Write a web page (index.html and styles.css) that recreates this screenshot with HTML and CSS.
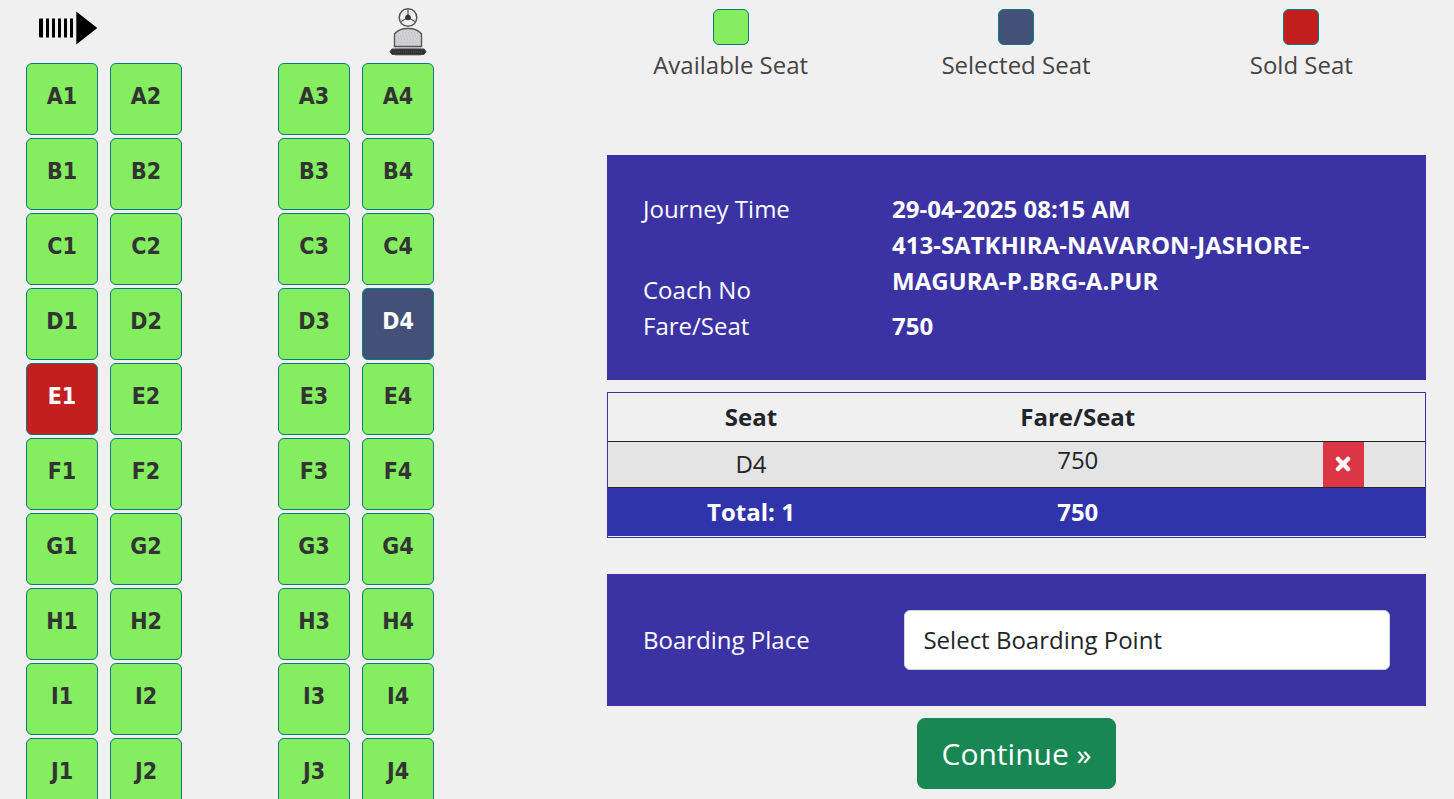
FILE: index.html
```html
<!DOCTYPE html>
<html lang="en">
<head>
  <meta charset="utf-8"/>
  <meta name="viewport" content="width=device-width, initial-scale=1">
  <link rel="stylesheet" href="styles.css">
  <script src="seats.js" defer></script>
  <title>Select Seat</title>
</head>
<body>
  <div class="booking">
    <section class="coach">
      <div class="coach-front">
        <svg class="door-arrow" width="60" height="36" viewBox="0 0 60 36" role="img" aria-label="Door">
          <path d="M2 8.500h3v19H2q-1 0-1-1v-17q0-1 1-1zM8 8.500h3v19H8zM14 8.500h3v19h-3zM20 8.500h3v19h-3zM26 8.500h3v19h-3zM32 8.500h3v19h-3zM38.300 1.500l21 16.500-21 16.500z"/>
        </svg>
        <svg class="driver" width="40" height="50" viewBox="0 0 40 50" role="img" aria-label="Driver">
          <!-- steering wheel -->
          <circle cx="20" cy="10.500" r="8.800" fill="#eee" stroke="#555" stroke-width="1.500"/>
          <path d="M20 10.500V2.500M20 10.500l-7 4M20 10.500l7 4" stroke="#555" stroke-width="1.300"/>
          <circle cx="20" cy="10.500" r="2.800" fill="#333"/>
          <!-- seat -->
          <path d="M6.500 39.500V27c3-4 8-5.500 13.500-5.500s10.500 1.500 13.500 5.500v12.500z" fill="#d0d0d6" stroke="#555" stroke-width="1.400"/>
          <path d="M11 26h19M9 29h22M10 32h21M9 35h22M10 38h21" stroke="#b8b8c8" stroke-dasharray="1 2"/>
          <path d="M12 27.500h19M10 30.500h21M12 33.500h20M10 36.500h21" stroke="#ddcfaa" stroke-dasharray="1 3"/>
          <rect x="7" y="40" width="26" height="2" fill="#bbb"/>
          <path d="M4 42h32l2 2.500-2 3H4l-2-3z" fill="#333" stroke="#444" stroke-linejoin="round"/>
          <path d="M5 45h30" stroke="#555" stroke-dasharray="1 1"/>
          <path d="M7 48.500h26" stroke="#bbb"/>
        </svg>
      </div>
      <div class="seats" id="seats"></div>
    </section>

    <main class="details">
      <ul class="legend">
        <li><span class="swatch available"></span>Available Seat</li>
        <li><span class="swatch selected"></span>Selected Seat</li>
        <li><span class="swatch sold"></span>Sold Seat</li>
      </ul>

      <dl class="panel journey">
        <dt>Journey Time</dt>
        <dd>29-04-2025 08:15 AM</dd>
        <dt class="coach-label">Coach No</dt>
        <dd class="coach-name">413-SATKHIRA-NAVARON-JASHORE-MAGURA-P.BRG-A.PUR</dd>
        <dt>Fare/Seat</dt>
        <dd>750</dd>
      </dl>

      <div class="fare-box">
        <table class="fares">
          <colgroup>
            <col class="col-seat">
            <col class="col-fare">
            <col class="col-remove">
          </colgroup>
          <thead>
            <tr><th>Seat</th><th>Fare/Seat</th><th></th></tr>
          </thead>
          <tbody>
            <tr>
              <td>D4</td>
              <td class="fare">750</td>
              <td>
                <button type="button" class="remove" aria-label="Remove seat D4">
                  <svg width="16" height="16" viewBox="0 0 16 16"><path d="M3 3l10 10M13 3L3 13" stroke="#fff" stroke-width="4.500" stroke-linecap="round"/></svg>
                </button>
              </td>
            </tr>
          </tbody>
          <tfoot>
            <tr><th>Total: 1</th><th>750</th><th></th></tr>
          </tfoot>
        </table>
      </div>

      <div class="panel boarding">
        <label for="boarding-place">Boarding Place</label>
        <select id="boarding-place">
          <option>Select Boarding Point</option>
        </select>
      </div>

      <button type="button" class="continue">Continue »</button>
    </main>
  </div>
</body>
</html>
```
FILE: styles.css
```css
* {
  box-sizing: border-box;
}

body {
  margin: 0;
  background: #f0f0f0;
  color: #212529;
  font: 24px/36px "Open Sans", sans-serif;
  height: 100vh;
  overflow: hidden;
}

.booking {
  display: grid;
  grid-template-columns: 1fr 58.5%;
  padding: 0 28px 0 26px;
}

.coach-front {
  display: flex;
  justify-content: space-between;
  width: 408px;
  height: 63px;
  padding: 7px 6px 0 12px;
}

.door-arrow {
  margin-top: 3px;
}

/* two seats, aisle, two seats */
.seats {
  display: grid;
  grid-template-columns: 72px 72px 72px 72px 72px;
  gap: 3px 12px;
}

.seat {
  height: 72px;
  padding: 0 0 6px;
  border: 1px solid #0a7a7a;
  border-radius: 6px;
  color: #333;
  font: bold 23px/36px "DejaVu Sans Condensed", "DejaVu Sans", sans-serif;
  cursor: pointer;
}

.seat:nth-child(4n+3) {
  grid-column: 4;
}

.available {
  background: #84ee60;
}

.selected {
  background: #435078;
}

.sold {
  background: #c31f1f;
}

.seat.selected,
.seat.sold {
  color: #fff;
}

.legend {
  display: grid;
  grid-template-columns: 1fr 1fr 1fr;
  height: 155px;
  margin: 0 -18px 0 -19px;
  padding: 9px 0 0;
  list-style: none;
  text-align: center;
  color: #444;
}

.swatch {
  display: block;
  width: 36px;
  height: 36px;
  margin: 0 auto 2px;
  border: 1px solid #0a7a7a;
  border-radius: 6px;
}

.panel {
  margin: 0;
  padding: 36px;
  background: #3b33a3;
  color: #fff;
}

.journey {
  display: grid;
  grid-template-columns: 1fr 2fr;
}

.journey dd {
  margin: 0;
  font-weight: bold;
}

.coach-label {
  align-self: end;
}

.coach-name {
  padding-bottom: 9px;
}

.fare-box {
  margin: 12px 0 36px;
  padding-bottom: 1px;
  border: 1px solid #3b33a3;
}

.fares {
  width: 100%;
  table-layout: fixed;
  border-collapse: collapse;
  text-align: center;
}

.col-seat {
  width: 35%;
}

.col-fare {
  width: 45%;
}

.col-remove {
  width: 20%;
}

.fares th,
.fares td {
  padding: 0;
}

.fares thead th {
  height: 48px;
  border-bottom: 1px solid #212529;
}

.fares td {
  height: 46px;
  background: #e4e4e4;
  border-bottom: 1px solid #212529;
}

.fares td.fare {
  padding-bottom: 8px;
}

.fares tfoot {
  background: #2f34ab;
  color: #fff;
}

.fares tfoot th {
  height: 49px;
}

.remove {
  display: block;
  width: 41px;
  height: 45px;
  margin: 0 auto;
  padding: 0;
  border: 0;
  background: #dc3545;
  cursor: pointer;
}

.remove svg {
  display: block;
  margin: auto;
}

.boarding {
  display: flex;
  align-items: center;
  justify-content: space-between;
}

.boarding select {
  appearance: none;
  width: 65%;
  height: 60px;
  padding: 0 18px;
  border: 1px solid #ced4da;
  border-radius: 6px;
  background: #fff;
  color: #212529;
  font: inherit;
}

.continue {
  display: block;
  margin: 12px auto 0;
  padding: 12px 24px;
  border: 1px solid #198754;
  border-radius: 8px;
  background: #198754;
  color: #fff;
  font: 30px/45px "Open Sans", sans-serif;
  cursor: pointer;
}
```
FILE: seats.js
```javascript
var seats = document.getElementById( "seats" );
var states = { D4: "selected", E1: "sold" };

"ABCDEFGHIJ".split( "" ).forEach( function( row ) {
    for ( var i = 1; i <= 4; i++ ) {
        var seat = document.createElement( "button" );
        seat.type = "button";
        seat.textContent = row + i;
        seat.className = "seat " + ( states[row + i] || "available" );
        seat.disabled = states[row + i] === "sold";
        seats.appendChild( seat );
    }
} );
```
